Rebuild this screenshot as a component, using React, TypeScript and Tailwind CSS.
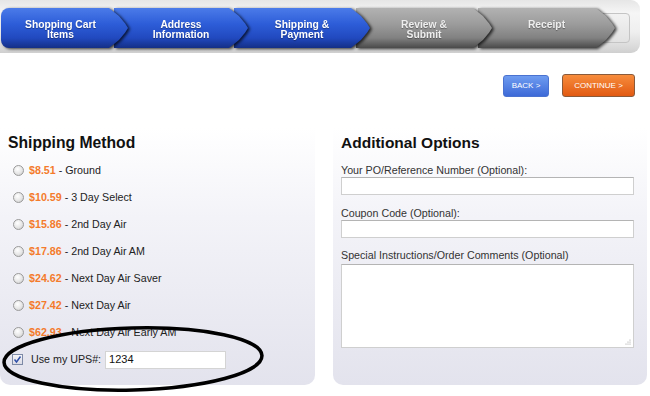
import React from "react";

const steps = [
  { lines: ["Shopping Cart", "Items"], blue: true, w: "w-[127px]" },
  { lines: ["Address", "Information"], blue: true, w: "w-[134px]" },
  { lines: ["Shipping &", "Payment"], blue: true, w: "w-[136px]" },
  { lines: ["Review &", "Submit"], blue: false, w: "w-[136px]" },
  { lines: ["Receipt"], blue: false, w: "w-[137px]" },
];

const zs = ["z-50", "z-40", "z-30", "z-20", "z-10"];

const rates = [
  ["$8.51", "Ground"],
  ["$10.59", "3 Day Select"],
  ["$15.86", "2nd Day Air"],
  ["$17.86", "2nd Day Air AM"],
  ["$24.62", "Next Day Air Saver"],
  ["$27.42", "Next Day Air"],
  ["$62.93", "Next Day Air Early AM"],
];

function Radio() {
  return (
    <div className="w-[11px] h-[11px] rounded-full border border-[#9a9a9a] bg-[radial-gradient(circle_at_40%_35%,#ffffff_0%,#e6e6e6_55%,#c4c4c4_100%)] shrink-0" />
  );
}

export default function App() {
  return (
    <div className="relative w-[650px] h-[396px] overflow-hidden bg-white font-['Liberation_Sans',Arial,sans-serif]">
      {/* progress frame */}
      <div className="w-[640px] h-[53px] rounded-r-[9px] bg-[linear-gradient(to_bottom,#e6e6e6_0%,#f6f6f6_25%,#efefef_60%,#d9d9d9_90%,#cfcfcf_100%)] pt-[8px] pl-[1px] flex">
        {steps.map((s, i) => (
          <div key={i} className={`relative ${zs[i]} ${s.w} ${i === 0 ? "" : "ml-[-14px]"} h-[40px] [filter:drop-shadow(2px_1px_1.5px_rgba(0,0,0,0.75))]`}>
            <div
              className={`w-full h-full ${i === 0 ? "rounded-l-[8px]" : ""} ${
                s.blue
                  ? "bg-[linear-gradient(to_bottom,#4b7be9_0%,#2d5dd8_40%,#2149bf_75%,#142f86_100%)]"
                  : "bg-[linear-gradient(to_bottom,#b2b2b2_0%,#9c9c9c_40%,#818181_75%,#4a4a4a_100%)]"
              } [clip-path:polygon(0_0,calc(100%-19px)_0,calc(100%-9px)_20%,calc(100%-3px)_38%,100%_50%,calc(100%-3px)_62%,calc(100%-9px)_80%,calc(100%-19px)_100%,0_100%)] ${
                i === 0 ? "pl-[6px]" : "pl-[14px]"
              } pr-[14px] pt-[12px] flex flex-col items-center text-[10.3px] leading-[10px] font-bold ${
                s.blue ? "text-white" : "text-[#eeeeee]"
              } [text-shadow:0_1px_1px_rgba(0,0,0,0.35)]`}
            >
              {s.lines.map((l, j) => (
                <span key={j} className="whitespace-nowrap">{l}</span>
              ))}
            </div>
          </div>
        ))}
        <div className="relative z-0 ml-[-16px] mt-[5px] w-[31px] h-[30px] rounded-[4px] border border-[#c4c4c4] bg-[linear-gradient(to_bottom,#f2f2f2,#e2e2e2)]" />
      </div>

      {/* buttons */}
      <div className="flex justify-end items-center gap-[13px] pr-[15px] mt-[21px] h-[23px]">
        <div className="w-[46px] h-[22px] rounded-[3px] border border-[#4a72d0] bg-[linear-gradient(to_bottom,#6e9cf0,#3d6ad8)] text-white text-[8px] flex items-center justify-center">
          BACK &gt;
        </div>
        <div className="w-[73px] h-[23px] rounded-[3px] border border-[#8a5a3a] bg-[linear-gradient(to_bottom,#f78c3c,#e25a12)] text-white text-[8px] flex items-center justify-center">
          CONTINUE &gt;
        </div>
      </div>

      {/* panels */}
      <div className="flex mt-[31px] gap-[18px]">
        <div className="w-[315px] h-[257px] rounded-b-[10px] bg-[linear-gradient(to_bottom,#ffffff_0%,#f3f3f8_35%,#e3e3ed_100%)] pt-[6px]">
          <div className="pl-[8px] text-[15.7px] leading-[18px] font-bold text-[#111]">Shipping Method</div>
          <div className="mt-[5px]">
            {rates.map(([p, n]) => (
              <div key={p} className="h-[27px] flex items-center pl-[13px] gap-[5px] text-[10.7px] text-[#222]">
                <Radio />
                <span>
                  <span className="font-bold text-[#f47b2c]">{p}</span> - {n}
                </span>
              </div>
            ))}
            <div className="h-[27px] flex items-center pl-[12px] text-[10.7px] text-[#222]">
              <div className="w-[11px] h-[11px] border border-[#7d8aa6] bg-[linear-gradient(to_bottom,#f4f4f8,#dcdce6)] flex items-center justify-center shrink-0">
                <svg width="9" height="9" viewBox="0 0 9 9">
                  <path d="M1.5 4.5 L3.5 7 L7.5 1.5" fill="none" stroke="#2e4fa8" strokeWidth="1.5" />
                </svg>
              </div>
              <span className="ml-[8px]">Use my UPS#:</span>
              <div className="ml-[4px] w-[121px] h-[18px] bg-white border border-[#d4d4d4] text-[11px] text-[#111] flex items-center pl-[3px]">
                1234
              </div>
            </div>
          </div>
        </div>

        <div className="w-[314px] h-[257px] rounded-b-[10px] bg-[linear-gradient(to_bottom,#ffffff_0%,#f3f3f8_35%,#e3e3ed_100%)] pt-[6px] pl-[8px]">
          <div className="text-[15.5px] leading-[18px] font-bold text-[#111]">Additional Options</div>
          <div className="mt-[11px] text-[10.7px] leading-[14px] text-[#333]">Your PO/Reference Number (Optional):</div>
          <div className="w-[293px] h-[18px] bg-white border border-[#cfcfcf] border-t-[#b4b4b4]" />
          <div className="mt-[11px] text-[10.7px] leading-[14px] text-[#333]">Coupon Code (Optional):</div>
          <div className="w-[293px] h-[18px] bg-white border border-[#cfcfcf] border-t-[#b4b4b4]" />
          <div className="mt-[10px] text-[10.7px] leading-[14px] text-[#333]">Special Instructions/Order Comments (Optional)</div>
          <div className="relative mt-[2px] w-[293px] h-[84px] bg-white border border-[#cfcfcf] border-t-[#b4b4b4]">
            <svg className="absolute right-[2px] bottom-[2px]" width="7" height="7" viewBox="0 0 7 7">
              <circle cx="6" cy="2" r="0.6" fill="#999" />
              <circle cx="6" cy="4" r="0.6" fill="#999" />
              <circle cx="4" cy="4" r="0.6" fill="#999" />
              <circle cx="6" cy="6" r="0.6" fill="#999" />
              <circle cx="4" cy="6" r="0.6" fill="#999" />
              <circle cx="2" cy="6" r="0.6" fill="#999" />
            </svg>
          </div>
        </div>
      </div>

      {/* hand-drawn ellipse */}
      <svg className="absolute left-0 top-[318px] pointer-events-none" width="290" height="78" viewBox="0 0 290 78">
        <ellipse cx="133" cy="41" rx="129" ry="31" fill="none" stroke="#000" strokeWidth="3.5" transform="rotate(-1.5 133 41)" />
      </svg>
    </div>
  );
}
